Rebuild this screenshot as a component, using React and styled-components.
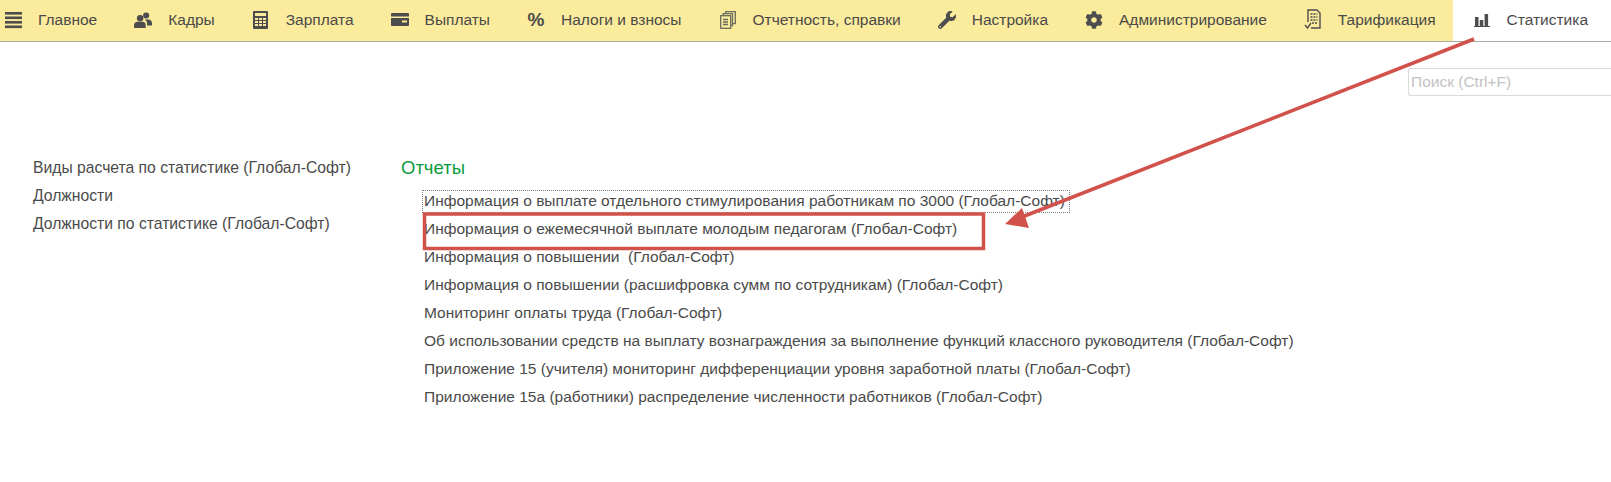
import React from 'react';
import styled, { createGlobalStyle } from 'styled-components';
import { FaCog, FaWrench } from 'react-icons/fa';

const GlobalStyle = createGlobalStyle`
  html, body {
    margin: 0;
    padding: 0;
    background: #fff;
    font-family: "Liberation Sans", Arial, sans-serif;
  }
`
const Page = styled.div`
  position: relative;
  width: 1611px;
  height: 482px;
  overflow: hidden;
`
const TopBar = styled.div`
  display: flex;
  height: 41px;
  background: #fbeb9c;
  border-bottom: 1px solid #a9a9a0;
`
const MenuItem = styled.div`
  display: flex;
  align-items: center;
  padding: 0 17px 2px 20px;
  padding-left: ${props => props.first ? '4px' : '20px'};
  background: ${props => props.active ? '#fff' : 'transparent'};
  color: #4a4a4a;
  font-size: 15.5px;
  white-space: nowrap;
  flex-grow: ${props => props.active ? 1 : 0};
`
const IconBox = styled.span`
  display: flex;
  align-items: center;
  justify-content: center;
  width: 18px;
  height: 20px;
  margin-right: 16px;
  color: #4d4d4d;
  font-size: 18px;
`
const Percent = styled.span`
  font-weight: bold;
  font-size: 19px;
`
const SearchRow = styled.div`
  display: flex;
  justify-content: flex-end;
  padding-top: 26px;
`
const SearchBox = styled.input`
  box-sizing: border-box;
  width: 203px;
  height: 28px;
  padding: 0 2px;
  border: 1px solid #d9d9d9;
  border-right: none;
  border-radius: 3px 0 0 3px;
  font-family: inherit;
  font-size: 15.5px;
  outline: none;

  &::placeholder {
    color: #c2c2c2;
  }
`
const Content = styled.div`
  display: flex;
  padding: 56px 0 0 33px;
`
const SideList = styled.div`
  width: 368px;
  padding-top: 2px;
`
const SideLink = styled.div`
  height: 28px;
  line-height: 28px;
  color: #4a4a4a;
  font-size: 15.7px;
`
const Reports = styled.div`
  flex: 1;
`
const ReportsTitle = styled.div`
  height: 28px;
  padding-top: 2px;
  line-height: 28px;
  color: #0c9b3f;
  font-size: 18.5px;
`
const ReportList = styled.div`
  display: flex;
  flex-direction: column;
  align-items: flex-start;
  padding-left: 22px;
  padding-top: 6px;
`
const ReportLink = styled.div`
  box-sizing: border-box;
  height: 28px;
  padding-top: 3px;
`
const ReportText = styled.span`
  display: block;
  height: 21px;
  padding: 0 4px 0 1px;
  line-height: 20px;
  color: #4a4a4a;
  font-size: 15.5px;
  white-space: pre;
  outline: ${props => props.focused ? '1px dotted #808080' : 'none'};
`
const Annotation = styled.svg`
  position: absolute;
  left: 0;
  top: 0;
  pointer-events: none;
`

const side = [
  'Виды расчета по статистике (Глобал-Софт)',
  'Должности',
  'Должности по статистике (Глобал-Софт)',
]

const reports = [
  'Информация о выплате отдельного стимулирования работникам по 3000 (Глобал-Софт)',
  'Информация о ежемесячной выплате молодым педагогам (Глобал-Софт)',
  'Информация о повышении  (Глобал-Софт)',
  'Информация о повышении (расшифровка сумм по сотрудникам) (Глобал-Софт)',
  'Мониторинг оплаты труда (Глобал-Софт)',
  'Об использовании средств на выплату вознаграждения за выполнение функций классного руководителя (Глобал-Софт)',
  'Приложение 15 (учителя) мониторинг дифференциации уровня заработной платы (Глобал-Софт)',
  'Приложение 15а (работники) распределение численности работников (Глобал-Софт)',
]

const Burger = () => (
  <svg width="17" height="18" viewBox="0 0 17 18" fill="#4d4d4d">
    <rect y="1" width="17" height="2.6" />
    <rect y="5.5" width="17" height="2.6" />
    <rect y="10" width="17" height="2.6" />
    <rect y="14.5" width="17" height="2.6" />
  </svg>
)

const People = () => (
  <svg width="20" height="18" viewBox="0 0 20 18" fill="#4d4d4d">
    <circle cx="13.5" cy="4" r="3.4" />
    <path d="M12 8.5h4c2.4 0 4 1.6 4 4v2.5h-5.5v-2c0-1.8-.8-3.2-2.5-4.5z" />
    <circle cx="6.8" cy="7" r="3.6" />
    <path d="M0 18v-3c0-2.5 1.6-4 4-4h5.5c2.4 0 3.5 1.5 3.500 4v3z" />
  </svg>
)

const Calculator = () => (
  <svg width="15" height="18" viewBox="0 0 15 18" fill="#4d4d4d">
    <path
      fillRule="evenodd"
      d="M1 0h13a1 1 0 0 1 1 1v16a1 1 0 0 1-1 1H1a1 1 0 0 1-1-1V1a1 1 0 0 1 1-1z
         M2 2v3h11V2z
         M2 7v2h3V7z M6 7v2h3V7z M10 7v2h3V7z
         M2 10v2h3v-2z M6 10v2h3v-2z M10 10v2h3v-2z
         M2 13v2h3v-2z M6 13v2h3v-2z M10 13v2h3v-2z"
    />
  </svg>
)

const Wallet = () => (
  <svg width="18" height="13" viewBox="0 0 18 13" fill="#4d4d4d">
    <path d="M1 0h16a1 1 0 0 1 1 1v2.5H0V1a1 1 0 0 1 1-1z" />
    <path d="M0 5h18v7a1 1 0 0 1-1 1H1a1 1 0 0 1-1-1z M11 7.5v2h5v-2z" fillRule="evenodd" />
  </svg>
)

const Copies = () => (
  <svg width="16" height="18" viewBox="0 0 16 18" fill="none" stroke="#6b6b5e" strokeWidth="1.3">
    <rect x="0.7" y="4.7" width="10" height="12.6" />
    <path d="M3.2 4.5V2.7h9.3v12h-1.500M5.7 2.5V.7H15.3v12h-2.600" />
    <path d="M3 8.5h5M3 11h5M3 13.5h5" />
  </svg>
)

const Tariff = () => (
  <svg width="18" height="21" viewBox="0 0 18 21" fill="none" stroke="#4d4d4d" strokeWidth="1.4">
    <path d="M4 13V1h9l3 3v15H7" />
    <path d="M6.5 5h7M6.5 8h7M6.5 11h7M8 14h5.5" strokeDasharray="2 1" strokeWidth="1.7" />
    <path d="M1 16l2.5 3L7 14" />
  </svg>
)

const Stats = () => (
  <svg width="16" height="14" viewBox="0 0 16 14" fill="#4d4d4d">
    <rect x="1" y="4" width="3.5" height="9" />
    <rect x="5.8" y="7" width="3.5" height="6" />
    <rect x="10.6" y="1" width="3.5" height="12" />
    <rect x="0" y="13" width="16" height="1" />
  </svg>
)

const menu = [
  { label: 'Главное', icon: <Burger />, first: true },
  { label: 'Кадры', icon: <People /> },
  { label: 'Зарплата', icon: <Calculator /> },
  { label: 'Выплаты', icon: <Wallet /> },
  { label: 'Налоги и взносы', icon: <Percent>%</Percent> },
  { label: 'Отчетность, справки', icon: <Copies /> },
  { label: 'Настройка', icon: <FaWrench /> },
  { label: 'Администрирование', icon: <FaCog /> },
  { label: 'Тарификация', icon: <Tariff /> },
  { label: 'Статистика', icon: <Stats />, active: true },
]

export default function App() {
  return (
    <Page>
      <GlobalStyle />
      <TopBar>
        {menu.map((item, i) => (
          <MenuItem key={i} first={item.first} active={item.active}>
            <IconBox>{item.icon}</IconBox>
            {item.label}
          </MenuItem>
        ))}
      </TopBar>
      <SearchRow>
        <SearchBox placeholder="Поиск (Ctrl+F)" readOnly />
      </SearchRow>
      <Content>
        <SideList>
          {side.map((s, i) => <SideLink key={i}>{s}</SideLink>)}
        </SideList>
        <Reports>
          <ReportsTitle>Отчеты</ReportsTitle>
          <ReportList>
            {reports.map((r, i) => (
              <ReportLink key={i}>
                <ReportText focused={i === 0}>{r}</ReportText>
              </ReportLink>
            ))}
          </ReportList>
        </Reports>
      </Content>
      <Annotation width="1611" height="482" viewBox="0 0 1611 482">
        <rect x="424.5" y="214" width="559" height="34.5" fill="none" stroke="#d0524a" strokeWidth="3.5" />
        <line x1="1474" y1="39" x2="1022" y2="217" stroke="#d0524a" strokeWidth="3.5" />
        <polygon points="1005,224 1022,208 1029,228" fill="#d0524a" />
      </Annotation>
    </Page>
  );
}
